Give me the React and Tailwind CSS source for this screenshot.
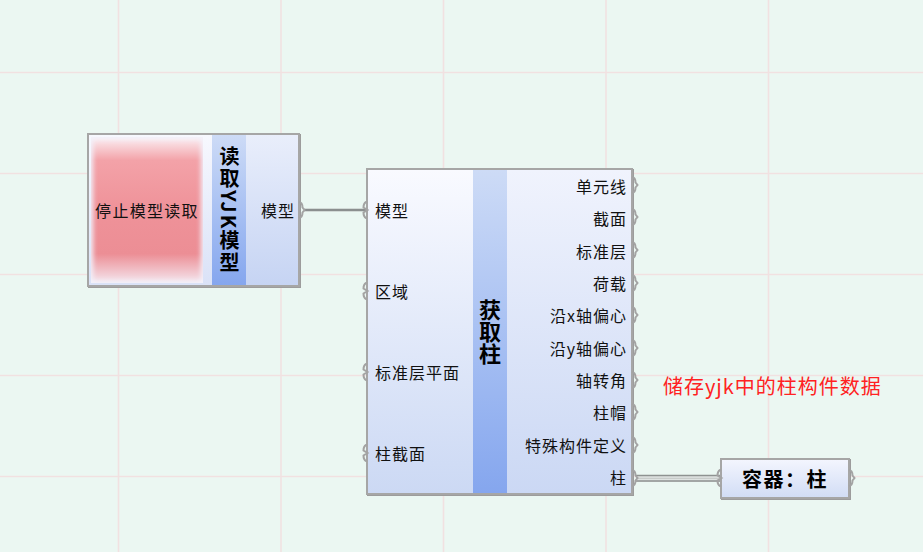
import React from "react";

const FONT = "font-['Noto_Sans_CJK_SC','Noto_Sans',sans-serif]";

function OutGrip({ x, y }) {
  return (
    <svg className="absolute" style={{ left: x - 2, top: y - 9 }} width="9" height="18" viewBox="0 0 9 18">
      <path d="M1,1 C4,1.5 4.5,4 4.5,6.5 L6.5,9 L4.5,11.5 C4.5,14 4,16.5 1,17" fill="none" stroke="#a3a3a3" strokeWidth="2" />
    </svg>
  );
}

function InGrip({ x, y }) {
  return (
    <svg className="absolute" style={{ left: x - 5, top: y - 9 }} width="10" height="18" viewBox="0 0 10 18">
      <path d="M5,0.5 C2,1.5 1.5,4 1.5,6.5 L5.5,9 L1.5,11.5 C1.5,14 2,16.5 5,17.5" fill="none" stroke="#a3a3a3" strokeWidth="2" />
    </svg>
  );
}

const inputs = ["模型", "区域", "标准层平面", "柱截面"];
const outputs = ["单元线", "截面", "标准层", "荷载", "沿x轴偏心", "沿y轴偏心", "轴转角", "柱帽", "特殊构件定义", "柱"];

export default function App() {
  const vx = [118.5, 281, 443.5, 606, 768.5];
  const hy = [72.5, 173.5, 274.5, 375.5, 476.5];
  return (
    <div className={`relative w-[923px] h-[552px] overflow-hidden bg-[#ebf7f2] text-[#111] ${FONT}`}>
      <svg className="absolute inset-0" width="923" height="552">
        {vx.map((x) => (
          <line key={"v" + x} x1={x} y1="0" x2={x} y2="552" stroke="#f1e1e1" strokeWidth="1.6" />
        ))}
        {hy.map((y) => (
          <line key={"h" + y} x1="0" y1={y} x2="923" y2={y} stroke="#f1e1e1" strokeWidth="1.6" />
        ))}
        <line x1="304" y1="210" x2="367" y2="210" stroke="#b9bdbc" strokeWidth="3" />
        <line x1="304" y1="210" x2="367" y2="210" stroke="#7c8180" strokeWidth="1.6" />
        <rect x="636" y="475" width="86" height="7" fill="#dfe3e2" />
        <line x1="636" y1="475.5" x2="722" y2="475.5" stroke="#8e9291" strokeWidth="1.6" />
        <line x1="636" y1="481" x2="722" y2="481" stroke="#8e9291" strokeWidth="1.6" />
        <line x1="636" y1="478.3" x2="722" y2="478.3" stroke="#c2c6c5" strokeWidth="1" />
      </svg>

      {/* Node 1 */}
      <div className="absolute left-[87px] top-[133px] w-[213px] h-[154px] border-2 border-[#a6a6a6] flex bg-gradient-to-b from-[#f7f8fe] to-[#dae2f7] shadow-[1px_1px_0_#9c9c9c]">
        <div className="w-[123px] h-full flex pl-[2px] pr-[9px] py-[2px]">
          <div className="flex-1 flex items-center justify-center bg-[linear-gradient(to_bottom,#fbf0f4_0%,#f3a2a8_16%,#ef9299_50%,#ec8e95_80%,#f4e7ef_100%)] shadow-[inset_0_0_5px_2px_#f2f2fb] text-[16px] tracking-[1.3px] leading-none">
            停止模型读取
          </div>
        </div>
        <div className="w-[34px] h-full bg-gradient-to-b from-[#cddbf6] to-[#85a6ee] flex items-center justify-center">
          <span className="[writing-mode:vertical-rl] font-bold text-[20px] tracking-[2px] leading-none text-black">读取YJK模型</span>
        </div>
        <div className="flex-1 flex items-center justify-end pr-[3px] bg-gradient-to-b from-[#e9eefb] to-[#c6d4f3] text-[16px] tracking-[1px] leading-none">
          模型
        </div>
      </div>

      {/* Node 2 */}
      <div className="absolute left-[366px] top-[168px] w-[267px] h-[327px] border-2 border-[#a6a6a6] flex shadow-[1px_1px_0_#9c9c9c]">
        <div className="w-[105px] h-full flex flex-col bg-gradient-to-b from-[#f9faff] to-[#ccd9f4] pl-[7px]">
          {inputs.map((t) => (
            <div key={t} className="h-[81px] flex items-center text-[16px] tracking-[1px] leading-none">
              {t}
            </div>
          ))}
        </div>
        <div className="w-[34px] h-full bg-gradient-to-b from-[#cddbf6] to-[#85a6ee] flex items-center justify-center">
          <span className="[writing-mode:vertical-rl] font-bold text-[22px] leading-none text-black">获取柱</span>
        </div>
        <div className="flex-1 h-full flex flex-col bg-gradient-to-b from-[#f0f3fd] to-[#cbd8f4] pr-[4px]">
          {outputs.map((t) => (
            <div key={t} className="h-[32.3px] flex items-center justify-end text-[16px] tracking-[1px] leading-none">
              {t}
            </div>
          ))}
        </div>
      </div>

      {/* Node 3 */}
      <div className="absolute left-[720px] top-[458px] w-[130px] h-[41px] border-2 border-[#a6a6a6] flex items-center justify-center bg-gradient-to-b from-[#f3f5fe] to-[#d2ddf5] shadow-[1px_1px_0_#9c9c9c]">
        <span className="font-bold text-[20px] tracking-[1.5px] leading-none text-black">容器：柱</span>
      </div>

      <OutGrip x={300} y={210} />
      {[210, 291, 372, 453].map((y) => (
        <InGrip key={y} x={367} y={y} />
      ))}
      {[185, 217, 250, 283, 315, 348, 380, 412, 445, 478].map((y) => (
        <OutGrip key={y} x={633} y={y} />
      ))}
      <InGrip x={721} y={478} />
      <OutGrip x={850} y={478} />

      <div className="absolute left-[663px] top-[372px] text-[20px] tracking-[1px] leading-[28px] text-[#ff2222] whitespace-nowrap">
        储存yjk中的柱构件数据
      </div>
    </div>
  );
}
